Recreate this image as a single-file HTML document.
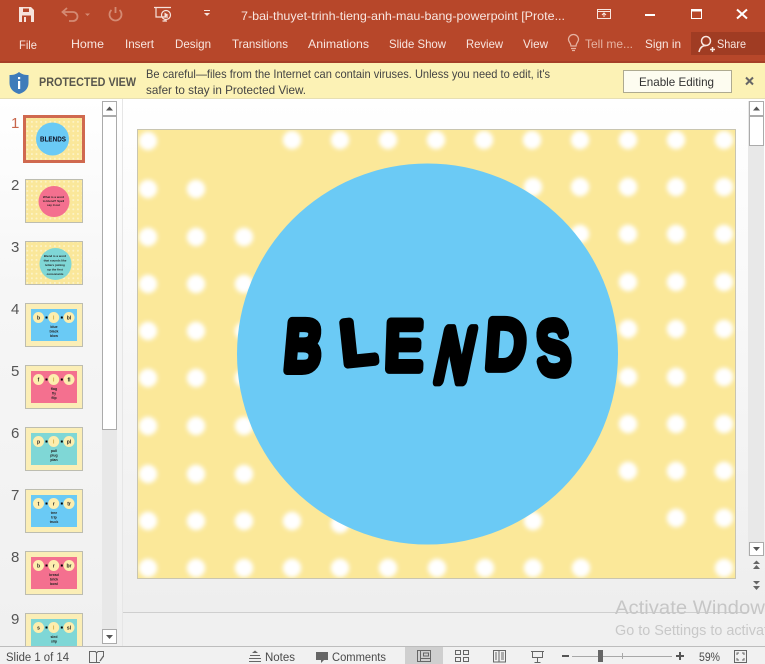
<!DOCTYPE html>
<html><head><meta charset="utf-8"><title>BLENDS</title>
<style>
html,body{margin:0;padding:0;width:765px;height:664px;overflow:hidden;background:#f0f0f0}
svg{display:block}
text{font-family:"Liberation Sans",sans-serif}
.r{fill:#f8e6e0;font-size:12px}
.s{fill:#4a4a4a;font-size:11.5px}
.n{fill:#555;font-size:15px}
.b{font-size:70px;fill:#000;stroke:#000;stroke-width:10px;stroke-linejoin:round;stroke-linecap:round;text-anchor:middle}
.t{font-size:5px;font-weight:bold;fill:#222;text-anchor:middle}
.c{fill:#fdeeae}
</style></head><body>
<svg xmlns="http://www.w3.org/2000/svg" width="765" height="664" viewBox="0 0 765 664">
<defs>
<linearGradient id="bg" x1="0" y1="0" x2="0" y2="1"><stop offset="0" stop-color="#fff"/><stop offset="1" stop-color="#eee"/></linearGradient>
<linearGradient id="lp" x1="0" y1="0" x2="0" y2="1"><stop offset="0" stop-color="#fff"/><stop offset=".35" stop-color="#f6f6f6"/><stop offset="1" stop-color="#f0f0f0"/></linearGradient>
<filter id="bl" x="-40%" y="-40%" width="180%" height="180%"><feGaussianBlur stdDeviation="2"/></filter>
<filter id="sf" x="-5%" y="-5%" width="110%" height="110%"><feGaussianBlur stdDeviation=".35"/></filter>
<pattern id="pd" x="25" y="0" width="4.6" height="4.6" patternUnits="userSpaceOnUse"><rect width="4.6" height="4.6" fill="#fae79a"/><circle cx="2.3" cy="2.3" r="1" fill="#fdf3c6"/></pattern>
<clipPath id="sl"><rect x="137" y="129" width="598" height="449"/></clipPath>
<clipPath id="th9"><rect x="25" y="613" width="58" height="33"/></clipPath>
<circle id="d" r="9.2" fill="#fff" filter="url(#bl)"/>
</defs>

<!-- main background -->
<rect width="765" height="664" fill="#f0f0f0"/>
<rect x="0" y="99" width="122" height="547" fill="url(#lp)"/>
<rect x="123" y="99" width="642" height="513" fill="url(#bg)"/>
<rect x="123" y="612" width="625" height="1" fill="#cfcfcf"/>
<rect x="122" y="99" width="1" height="547" fill="#e6e6e6"/>

<!-- ribbon -->
<rect width="765" height="62" fill="#b7472a"/>
<rect y="61" width="765" height="2" fill="#a63f26"/>
<!-- save -->
<g transform="translate(19,7)"><path d="M0 0H12L15 3V15H0Z" fill="#f6e3dc"/><rect x="4" y="1.500" width="6" height="3.500" fill="#b7472a"/><rect x="3" y="8.500" width="9" height="6.500" fill="#b7472a"/><rect x="5" y="10" width="2" height="5" fill="#f6e3dc"/></g>
<!-- undo -->
<g fill="none" stroke="#d48a73" stroke-width="1.8"><path d="M63 12H73a4.500 4.500 0 0 1 0 9H69"/><path d="M67 8L62.500 12L67 16"/><path d="M111.500 10a6 6 0 1 0 8 0"/><path d="M115.500 7V13"/></g>
<path d="M85 13.500H90L87.500 16Z" fill="#d48a73"/>
<!-- present -->
<g fill="none" stroke="#f6e3dc" stroke-width="1.2"><path d="M154 7.500H171"/><path d="M156 8V17H168"/><circle cx="166" cy="15" r="4.500"/><path d="M162.500 21H167M165 19.500V21"/></g><path d="M164.500 12.500L168.500 15L164.500 17.500Z" fill="#f6e3dc"/>
<g fill="#f6e3dc"><rect x="204" y="10" width="6" height="1"/><path d="M204 13H210L207 16Z"/></g>
<text x="241" y="20" class="r" textLength="324" lengthAdjust="spacingAndGlyphs">7-bai-thuyet-trinh-tieng-anh-mau-bang-powerpoint [Prote...</text>
<!-- window controls -->
<g fill="none" stroke="#f8e6e0"><rect x="597.500" y="9.500" width="13" height="9" stroke-width="1"/><path d="M597 11.500H611"/><path d="M604 17V13M602 15L604 13L606 15" stroke-width="1"/></g>
<rect x="645" y="14" width="10" height="2" fill="#fff"/>
<g fill="none" stroke="#fff"><rect x="691.500" y="9.500" width="10" height="9" stroke-width="1"/><path d="M691 10.500H702" stroke-width="2"/><path d="M737 9.500L747 18.500M747 9.500L737 18.500" stroke-width="2"/></g>
<!-- tabs -->
<text x="19" y="49" class="r" textLength="18" lengthAdjust="spacingAndGlyphs">File</text>
<text x="71" y="48" class="r" textLength="33" lengthAdjust="spacingAndGlyphs">Home</text>
<text x="125" y="48" class="r" textLength="29" lengthAdjust="spacingAndGlyphs">Insert</text>
<text x="175" y="48" class="r" textLength="36" lengthAdjust="spacingAndGlyphs">Design</text>
<text x="232" y="48" class="r" textLength="56" lengthAdjust="spacingAndGlyphs">Transitions</text>
<text x="308" y="48" class="r" textLength="61" lengthAdjust="spacingAndGlyphs">Animations</text>
<text x="389" y="48" class="r" textLength="57" lengthAdjust="spacingAndGlyphs">Slide Show</text>
<text x="466" y="48" class="r" textLength="37" lengthAdjust="spacingAndGlyphs">Review</text>
<text x="523" y="48" class="r" textLength="25" lengthAdjust="spacingAndGlyphs">View</text>
<g fill="none" stroke="#e6b3a2" stroke-width="1.300"><path d="M571 46C571 43 568.500 42 568.500 39.500a5 5 0 0 1 10 0C578.500 42 576 43 576 46Z"/><path d="M571 48.500H576M572 50.500H575"/></g>
<text x="585" y="48" class="r" style="fill:#e6b3a2" textLength="48" lengthAdjust="spacingAndGlyphs">Tell me...</text>
<text x="645" y="48" class="r" textLength="36" lengthAdjust="spacingAndGlyphs">Sign in</text>
<rect x="691" y="32" width="74" height="23" fill="#a03c23"/>
<g fill="none" stroke="#f8e6e0" stroke-width="1.500"><circle cx="706" cy="41" r="4.500"/><path d="M699 52C700 47 703 45.500 706 45.500"/><path d="M710 49.500H715M712.500 47V52"/></g>
<text x="717" y="48" class="r" textLength="29" lengthAdjust="spacingAndGlyphs">Share</text>

<!-- protected view -->
<rect y="63" width="765" height="35" fill="#fcf2b5"/>
<rect y="98" width="765" height="1" fill="#e6dfb4"/>
<path d="M19 72C16 74.500 13 75 9.500 75V83C9.500 89 14 92.500 19 94C24 92.500 28.500 89 28.500 83V75C25 75 22 74.500 19 72Z" fill="#3f7cba"/>
<rect x="18" y="81" width="2.200" height="8" fill="#fff"/><rect x="18" y="77" width="2.200" height="2.200" fill="#fff"/>
<text x="39" y="86" font-size="12" fill="#3a3a3a" textLength="97" lengthAdjust="spacingAndGlyphs" style="font-weight:bold;fill-opacity:.85">PROTECTED VIEW</text>
<text x="146" y="78" font-size="12" fill="#444" textLength="404" lengthAdjust="spacingAndGlyphs">Be careful—files from the Internet can contain viruses. Unless you need to edit, it's</text>
<text x="146" y="94" font-size="12" fill="#444" textLength="160" lengthAdjust="spacingAndGlyphs">safer to stay in Protected View.</text>
<rect x="623.500" y="70.500" width="108" height="22" fill="#fdfcf0" stroke="#aeaa90"/>
<text x="639" y="86" font-size="12" fill="#333" textLength="75" lengthAdjust="spacingAndGlyphs">Enable Editing</text>
<path d="M746 77.500L753 84.500M753 77.500L746 84.500" stroke="#666" stroke-width="2" fill="none"/>

<!-- left scrollbar -->
<rect x="102" y="101" width="15" height="543" fill="#e8e8e8"/>
<rect x="102.500" y="101.500" width="14" height="14" fill="#fff" stroke="#ababab"/>
<rect x="102.500" y="116.500" width="14" height="313" fill="#fff" stroke="#ababab"/>
<rect x="102.500" y="629.500" width="14" height="14" fill="#fff" stroke="#ababab"/>
<path d="M106 110.500H113L109.500 106.500Z" fill="#555"/><path d="M106 635H113L109.500 639Z" fill="#555"/>

<!-- right scrollbar -->
<rect x="748" y="101" width="16" height="455" fill="#e8e8e8"/>
<rect x="749.500" y="101.500" width="14" height="14" fill="#fff" stroke="#ababab"/>
<rect x="749.500" y="116.500" width="14" height="29" fill="#fff" stroke="#ababab"/>
<rect x="749.500" y="542.500" width="14" height="13" fill="#fff" stroke="#ababab"/>
<path d="M753 110.500H760L756.500 106.500Z" fill="#555"/><path d="M753 547H760L756.500 551Z" fill="#555"/>
<g fill="#666"><path d="M753 564H760L756.500 560.500Z"/><path d="M753 569H760L756.500 565Z"/><path d="M753 581H760L756.500 584.500Z"/><path d="M753 586H760L756.500 590Z"/></g>

<!-- slide -->
<rect x="137" y="129" width="598" height="449" fill="#fbe899"/>
<g clip-path="url(#sl)">
<use href="#d" x="148" y="141"/><use href="#d" x="292" y="140"/><use href="#d" x="340" y="140"/><use href="#d" x="388" y="140"/><use href="#d" x="436" y="140"/><use href="#d" x="484" y="140"/><use href="#d" x="532" y="140"/><use href="#d" x="580" y="140"/><use href="#d" x="628" y="140"/><use href="#d" x="676" y="140"/><use href="#d" x="724" y="140"/>
<use href="#d" x="148" y="189"/><use href="#d" x="196" y="189"/><use href="#d" x="533" y="187"/><use href="#d" x="580" y="187"/><use href="#d" x="628" y="187"/><use href="#d" x="676" y="187"/><use href="#d" x="724" y="187"/>
<use href="#d" x="148" y="237"/><use href="#d" x="196" y="237"/><use href="#d" x="244" y="237"/><use href="#d" x="580" y="234"/><use href="#d" x="628" y="234"/><use href="#d" x="676" y="234"/><use href="#d" x="724" y="234"/>
<use href="#d" x="148" y="284"/><use href="#d" x="196" y="284"/><use href="#d" x="244" y="284"/><use href="#d" x="628" y="282"/><use href="#d" x="676" y="282"/><use href="#d" x="724" y="282"/>
<use href="#d" x="148" y="331"/><use href="#d" x="196" y="331"/><use href="#d" x="244" y="331"/><use href="#d" x="628" y="329"/><use href="#d" x="676" y="329"/><use href="#d" x="724" y="329"/>
<use href="#d" x="148" y="378"/><use href="#d" x="196" y="378"/><use href="#d" x="244" y="378"/><use href="#d" x="628" y="377"/><use href="#d" x="676" y="377"/><use href="#d" x="724" y="377"/>
<use href="#d" x="148" y="426"/><use href="#d" x="196" y="426"/><use href="#d" x="244" y="426"/><use href="#d" x="628" y="424"/><use href="#d" x="676" y="424"/><use href="#d" x="724" y="424"/>
<use href="#d" x="148" y="474"/><use href="#d" x="196" y="474"/><use href="#d" x="244" y="474"/><use href="#d" x="628" y="471"/><use href="#d" x="676" y="471"/><use href="#d" x="724" y="471"/>
<use href="#d" x="148" y="521"/><use href="#d" x="196" y="521"/><use href="#d" x="244" y="521"/><use href="#d" x="292" y="521"/><use href="#d" x="340" y="524"/><use href="#d" x="533" y="521"/><use href="#d" x="676" y="518"/><use href="#d" x="724" y="518"/>
<use href="#d" x="148" y="568"/><use href="#d" x="196" y="568"/><use href="#d" x="244" y="568"/><use href="#d" x="292" y="568"/><use href="#d" x="340" y="568"/><use href="#d" x="388" y="568"/><use href="#d" x="437" y="568"/><use href="#d" x="485" y="568"/><use href="#d" x="533" y="568"/><use href="#d" x="581" y="568"/><use href="#d" x="724" y="568"/>
</g>
<rect x="137.500" y="129.500" width="598" height="449" fill="none" stroke="#c9c5b0"/>
<circle cx="427.500" cy="354" r="190.500" fill="#6bcaf5"/>
<!-- BLENDS title -->
<text class="b" transform="translate(301,370) skewX(-5) scale(.78,1)">B</text>
<text class="b" transform="translate(360,363) rotate(-6) scale(.88,.87)">L</text>
<text class="b" transform="translate(403,369) skewX(-2) scale(.8,.97)">E</text>
<text class="b" transform="translate(450,381) skewX(-12) scale(.7,1.07)">N</text>
<text class="b" transform="translate(504,368) skewX(-4) scale(.78,.98)">D</text>
<text class="b" transform="translate(555,373) rotate(-4) scale(.7,1.04)">S</text>

<!-- watermark -->
<text x="615" y="614" font-size="19.500" fill="#c6c6c6" textLength="160" lengthAdjust="spacingAndGlyphs">Activate Windows</text>
<text x="615" y="635" font-size="14.500" fill="#c8c8c8" textLength="161" lengthAdjust="spacingAndGlyphs">Go to Settings to activate</text>

<!-- thumbnails -->
<text x="11" y="128" class="n" style="fill:#c8664c">1</text>
<text x="11" y="190" class="n">2</text>
<text x="11" y="252" class="n">3</text>
<text x="11" y="314" class="n">4</text>
<text x="11" y="376" class="n">5</text>
<text x="11" y="438" class="n">6</text>
<text x="11" y="500" class="n">7</text>
<text x="11" y="562" class="n">8</text>
<text x="11" y="624" class="n">9</text>

<g filter="url(#sf)">
<rect x="25" y="117" width="58" height="44" fill="url(#pd)"/>
<circle cx="52.500" cy="139" r="16.500" fill="#6bcaf5"/>
<text x="53" y="141.500" font-size="7.500" font-weight="bold" fill="#0a0a1e" text-anchor="middle" textLength="26" lengthAdjust="spacingAndGlyphs">BLENDS</text>

<rect x="25.500" y="179.500" width="57" height="43" fill="url(#pd)" stroke="#bdbdb0"/>
<circle cx="54" cy="201.500" r="15.500" fill="#f4708f"/>
<text x="53.500" y="198" class="t" style="font-size:3px">What is a word</text><text x="53.500" y="202" class="t" style="font-size:3px">to blend? Spell</text><text x="53.500" y="206" class="t" style="font-size:3px">say it out</text>

<rect x="25.500" y="241.500" width="57" height="43" fill="url(#pd)" stroke="#bdbdb0"/>
<circle cx="55.500" cy="264" r="16" fill="#7fd7d6"/>
<text x="55" y="257" class="t" style="font-size:3px">Blend is a word</text><text x="55" y="261.500" class="t" style="font-size:3px">that sounds like</text><text x="55" y="266" class="t" style="font-size:3px">letters joining</text><text x="55" y="270.500" class="t" style="font-size:3px">up the first</text><text x="55" y="275" class="t" style="font-size:3px">consonants</text>

<!-- 4 -->
<g transform="translate(0,303)"><rect x="25.500" y=".5" width="57" height="43" fill="#fbeeb6" stroke="#bdbdb0"/><rect x="31" y="6" width="46" height="32" fill="#6bcaf5"/><circle class="c" cx="38.500" cy="14.500" r="5.500"/><circle class="c" cx="53.700" cy="14.500" r="5.500"/><circle class="c" cx="69" cy="14.500" r="5.500"/><rect x="45.500" y="13.500" width="2" height="2"/><rect x="60.800" y="13.500" width="2" height="2"/><text x="38.500" y="16.500" class="t">b</text><text x="53.700" y="16.500" class="t" style="fill:#c8a030">l</text><text x="69" y="16.500" class="t">bl</text><text x="54" y="25" class="t" style="font-size:3.500px">blue</text><text x="54" y="29.500" class="t" style="font-size:3.500px">black</text><text x="54" y="34" class="t" style="font-size:3.500px">blow</text></g>
<!-- 5 -->
<g transform="translate(0,365)"><rect x="25.500" y=".5" width="57" height="43" fill="#fbeeb6" stroke="#bdbdb0"/><rect x="31" y="6" width="46" height="32" fill="#f4708f"/><circle class="c" cx="38.500" cy="14.500" r="5.500"/><circle class="c" cx="53.700" cy="14.500" r="5.500"/><circle class="c" cx="69" cy="14.500" r="5.500"/><rect x="45.500" y="13.500" width="2" height="2"/><rect x="60.800" y="13.500" width="2" height="2"/><text x="38.500" y="16.500" class="t">f</text><text x="53.700" y="16.500" class="t" style="fill:#c8a030">l</text><text x="69" y="16.500" class="t">fl</text><text x="54" y="25" class="t" style="font-size:3.500px">flag</text><text x="54" y="29.500" class="t" style="font-size:3.500px">fly</text><text x="54" y="34" class="t" style="font-size:3.500px">flip</text></g>
<!-- 6 -->
<g transform="translate(0,427)"><rect x="25.500" y=".5" width="57" height="43" fill="#fbeeb6" stroke="#bdbdb0"/><rect x="31" y="6" width="46" height="32" fill="#7fd7d6"/><circle class="c" cx="38.500" cy="14.500" r="5.500"/><circle class="c" cx="53.700" cy="14.500" r="5.500"/><circle class="c" cx="69" cy="14.500" r="5.500"/><rect x="45.500" y="13.500" width="2" height="2"/><rect x="60.800" y="13.500" width="2" height="2"/><text x="38.500" y="16.500" class="t">p</text><text x="53.700" y="16.500" class="t" style="fill:#c8a030">l</text><text x="69" y="16.500" class="t">pl</text><text x="54" y="25" class="t" style="font-size:3.500px">pull</text><text x="54" y="29.500" class="t" style="font-size:3.500px">plug</text><text x="54" y="34" class="t" style="font-size:3.500px">plan</text></g>
<!-- 7 -->
<g transform="translate(0,489)"><rect x="25.500" y=".5" width="57" height="43" fill="#fbeeb6" stroke="#bdbdb0"/><rect x="31" y="6" width="46" height="32" fill="#6bcaf5"/><circle class="c" cx="38.500" cy="14.500" r="5.500"/><circle class="c" cx="53.700" cy="14.500" r="5.500"/><circle class="c" cx="69" cy="14.500" r="5.500"/><rect x="45.500" y="13.500" width="2" height="2"/><rect x="60.800" y="13.500" width="2" height="2"/><text x="38.500" y="16.500" class="t">t</text><text x="53.700" y="16.500" class="t">r</text><text x="69" y="16.500" class="t">tr</text><text x="54" y="25" class="t" style="font-size:3.500px">tree</text><text x="54" y="29.500" class="t" style="font-size:3.500px">trip</text><text x="54" y="34" class="t" style="font-size:3.500px">truck</text></g>
<!-- 8 -->
<g transform="translate(0,551)"><rect x="25.500" y=".5" width="57" height="43" fill="#fbeeb6" stroke="#bdbdb0"/><rect x="31" y="6" width="46" height="32" fill="#f4708f"/><circle class="c" cx="38.500" cy="14.500" r="5.500"/><circle class="c" cx="53.700" cy="14.500" r="5.500"/><circle class="c" cx="69" cy="14.500" r="5.500"/><rect x="45.500" y="13.500" width="2" height="2"/><rect x="60.800" y="13.500" width="2" height="2"/><text x="38.500" y="16.500" class="t">b</text><text x="53.700" y="16.500" class="t">r</text><text x="69" y="16.500" class="t">br</text><text x="54" y="25" class="t" style="font-size:3.500px">bread</text><text x="54" y="29.500" class="t" style="font-size:3.500px">brick</text><text x="54" y="34" class="t" style="font-size:3.500px">bowl</text></g>
</g>
<rect x="24.500" y="116.500" width="59" height="45" fill="none" stroke="#d0694f" stroke-width="3"/>
<!-- 9 -->
<g clip-path="url(#th9)"><g transform="translate(0,613)"><rect x="25.500" y=".5" width="57" height="43" fill="#fbeeb6" stroke="#bdbdb0"/><rect x="31" y="6" width="46" height="32" fill="#7fd7d6"/><circle class="c" cx="38.500" cy="14.500" r="5.500"/><circle class="c" cx="53.700" cy="14.500" r="5.500"/><circle class="c" cx="69" cy="14.500" r="5.500"/><rect x="45.500" y="13.500" width="2" height="2"/><rect x="60.800" y="13.500" width="2" height="2"/><text x="38.500" y="16.500" class="t">s</text><text x="53.700" y="16.500" class="t" style="fill:#c8a030">l</text><text x="69" y="16.500" class="t">sl</text><text x="54" y="25" class="t" style="font-size:3.500px">sled</text><text x="54" y="29.500" class="t" style="font-size:3.500px">slip</text></g></g>

<!-- status bar -->
<rect y="646" width="765" height="18" fill="#f1f1f1"/>
<rect y="646" width="765" height="1" fill="#bdbdbd"/>
<text x="6" y="661" class="s" textLength="63" lengthAdjust="spacingAndGlyphs">Slide 1 of 14</text>
<g fill="none" stroke="#666"><path d="M89.500 651.500H95.500L96.500 653V662.500H89.500Z"/><path d="M96.500 653L98 651.500H103.500V657M96.500 662.500H100"/><path d="M100 661L103.500 656" stroke-width="1.300"/></g>
<g stroke="#666" fill="none"><path d="M250 655.500H260M249 658.500H261M249 661.500H261"/></g><path d="M252 653L255 650.500L258 653Z" fill="#666"/>
<text x="265" y="661" class="s" textLength="30" lengthAdjust="spacingAndGlyphs">Notes</text>
<path d="M316 652H328V660H324L321 663V660H316Z" fill="#666"/>
<text x="332" y="661" class="s" textLength="54" lengthAdjust="spacingAndGlyphs">Comments</text>
<rect x="405" y="647" width="38" height="17" fill="#cfcfcf"/>
<g fill="none" stroke="#666"><rect x="417.500" y="650.500" width="13" height="11"/><path d="M420.500 650.500V661.500M420.500 658.500H430.500"/><rect x="423.500" y="653" width="5" height="3"/>
<rect x="455.500" y="650.500" width="5" height="4"/><rect x="463.500" y="650.500" width="5" height="4"/><rect x="455.500" y="657.500" width="5" height="4"/><rect x="463.500" y="657.500" width="5" height="4"/>
<path d="M493.500 650.500H499V662H493.500ZM499 650.500H505.500V662H499ZM495 653H497M495 655H497M495 657H497M495 659H497M501 653H504M501 655H504M501 657H504M501 659H504"/>
<path d="M531 651.500H544M532.500 651.500V657.500H542.500V651.500M537.500 657.500V662M534.500 662.500H540.500"/>
<rect x="734.500" y="650.500" width="12" height="12"/></g>
<path d="M737 655V653H739M744 655V653H742M737 658V660H739M744 658V660H742" fill="none" stroke="#666"/>
<rect x="562" y="655" width="7" height="2" fill="#555"/>
<rect x="572" y="656" width="100" height="1" fill="#a8a8a8"/>
<rect x="622" y="653" width="1" height="6" fill="#a8a8a8"/>
<rect x="598" y="650" width="5" height="12" fill="#666"/>
<path d="M676 656H684M680 652V660" stroke="#555" stroke-width="2" fill="none"/>
<text x="699" y="661" class="s" textLength="21" lengthAdjust="spacingAndGlyphs">59%</text>
</svg>
</body></html>
